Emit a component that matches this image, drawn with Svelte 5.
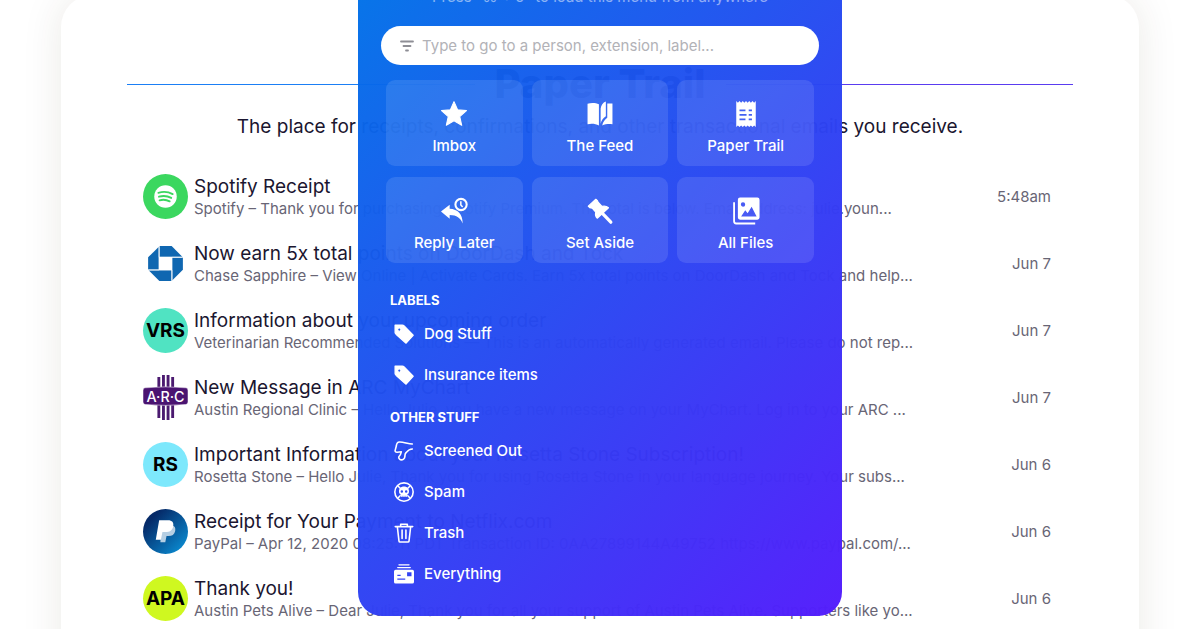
<script>
  const shortcuts = [
    { icon: 'star', label: 'Imbox' },
    { icon: 'feed', label: 'The Feed' },
    { icon: 'receipt', label: 'Paper Trail' },
    { icon: 'reply', label: 'Reply Later' },
    { icon: 'pin', label: 'Set Aside' },
    { icon: 'files', label: 'All Files' }
  ];

  const groups = [
    {
      title: 'Labels',
      items: [
        { icon: 'tag', label: 'Dog Stuff' },
        { icon: 'tag', label: 'Insurance items' }
      ]
    },
    {
      title: 'Other stuff',
      items: [
        { icon: 'thumb', label: 'Screened Out' },
        { icon: 'spam', label: 'Spam' },
        { icon: 'trash', label: 'Trash' },
        { icon: 'everything', label: 'Everything' }
      ]
    }
  ];

  const emails = [
    { logo: 'spotify', subject: 'Spotify Receipt', preview: 'Spotify – Thank you for purchasing Spotify Premium. The total is below. Email address: julie.youn...', date: '5:48am' },
    { logo: 'chase', subject: 'Now earn 5x total points on DoorDash and Tock', preview: 'Chase Sapphire – View Online | Activate Cards. Earn 5x total points on DoorDash and Tock and help...', date: 'Jun 7' },
    { initials: 'VRS', color: '#50e3c2', subject: 'Information about your upcoming order', preview: 'Veterinarian Recommended Solutions — This is an automatically generated email. Please do not rep...', date: 'Jun 7' },
    { logo: 'arc', subject: 'New Message in ARC MyChart', preview: 'Austin Regional Clinic – Hello Julie, you have a new message on your MyChart. Log in to your ARC ...', date: 'Jun 7' },
    { initials: 'RS', color: '#7de8fc', subject: 'Important Information about your Rosetta Stone Subscription!', preview: 'Rosetta Stone – Hello Julie, Thank you for using Rosetta Stone in your language journey. Your subs...', date: 'Jun 6' },
    { logo: 'paypal', subject: 'Receipt for Your Payment to Netflix.com', preview: 'PayPal – Apr 12, 2020 08:25:11 PDT Transaction ID: 0AA27899144A49752 https://www.paypal.com/...', date: 'Jun 6' },
    { initials: 'APA', color: '#cff820', subject: 'Thank you!', preview: 'Austin Pets Alive – Dear Julie, Thank you for all your support of Austin Pets Alive. Supporters like yo...', date: 'Jun 6' }
  ];
</script>

{#snippet glyph(name)}
  <svg class="glyph" viewBox="0 0 24 24" aria-hidden="true">
    {#if name === 'star'}
      <path d="M12 0.6l3.3 7.5 8.2.8-6.2 5.5 1.8 8-7.1-4.2-7.1 4.2 1.8-8L.5 8.9l8.2-.8z" fill="currentColor" stroke="currentColor" stroke-linejoin="round" />
    {:else if name === 'feed'}
      <path d="M.5 2.500C4 1.600 8 1.700 11 3v19.500C8 21 4 20.600.5 21.500z" fill="currentColor" />
      <path d="M12.600 7c.4-3 2-5.500 4.800-6.500v13.500c-2.600 1.500-4.200 4-4.800 7z" fill="currentColor" />
      <path d="M18.700 2.300h4.800v19.200c-3.500-.4-6.500-.2-9.500 1 .8-3 2.400-5.500 4.700-7z" fill="currentColor" />
    {:else if name === 'receipt'}
      <path fill-rule="evenodd" fill="currentColor" d="M3 0l1.500 1.500L6 0l1.500 1.500L9 0l1.500 1.500L12 0l1.500 1.500L15 0l1.500 1.500L18 0l1.500 1.500L21 0v24l-1.500-1.500L18 24l-1.500-1.500L15 24l-1.500-1.500L12 24l-1.500-1.500L9 24l-1.500-1.500L6 24l-1.500-1.500L3 24zM6 7.800v1.600h5.500V7.800zm8.500 0v1.600h3V7.800zM6 12v1.600h6.500V12zm8.500 0v1.600h3V12zM6 16.200v1.600h5.500v-1.600zm8.500 0v1.600h3v-1.600z" />
    {:else if name === 'reply'}
      <path fill="currentColor" d="M0 12.500L8 6.300v3.600c7.500.3 12 5 12 13.700-2-5-5.500-7.800-12-7.800v3.400z" />
      <circle cx="18.500" cy="6" r="5.200" fill="none" stroke="currentColor" stroke-width="1.900" />
      <path d="M18.300 3v3.400l1.700 1.900" fill="none" stroke="currentColor" stroke-width="1.400" />
    {:else if name === 'pin'}
      <path fill="currentColor" stroke="currentColor" stroke-width="1.200" stroke-linejoin="round" d="M1.200 7.500L8.200 1.200c1 .5 1.800 1.500 2.200 3l3.400 3.600c2.200-.5 4.600 0 6 1.200L9.400 18.600c-1.400-1.500-1.800-3.600-1.300-5.600L4.800 9.400C3 9.300 1.900 8.600 1.200 7.500z" />
      <path d="M14 14l8 8.300" stroke="currentColor" stroke-width="3" stroke-linecap="round" />
    {:else if name === 'files'}
      <path fill-rule="evenodd" fill="currentColor" d="M6.500-.5h16a2 2 0 0 1 2 2v16.500a2 2 0 0 1-2 2h-16a2 2 0 0 1-2-2V1.500a2 2 0 0 1 2-2zM9.200 4a2 2 0 1 0 .1 4 2 2 0 0 0-.1-4zM7.500 17h14.300l-4.600-9-3.700 6-2.200-2.600z" />
      <path d="M1 4v17.500a2 2 0 0 0 2 2h17.500" fill="none" stroke="currentColor" stroke-width="1.700" />
    {:else if name === 'tag'}
      <path fill-rule="evenodd" fill="currentColor" stroke="currentColor" stroke-linejoin="round" stroke-width="1.500" d="M1.300 1.300h8.700c1 0 1.500.3 2.200 1L23 13.500 14.500 23 2.700 12.500c-.8-.8-1.400-1.200-1.400-2.300zM6.300 4.700a2 2 0 1 0 .1 4 2 2 0 0 0-.1-4z" />
    {:else if name === 'thumb'}
      <path fill="none" stroke="currentColor" stroke-width="1.900" stroke-linejoin="round" stroke-linecap="round" d="M22 3.500C17 3.500 11 1 6.500 1.300 3.500 1.500 3 4 2.800 6L1.300 11.500c0 1.500 1 2 2.500 1.900l5-.4c-.6 1-.3 3.500-2.600 5.300-1.200 1.500-.2 3.200 1.500 4.200 3 .6 5.300-1.600 5.300-3.600.4-2-.4-3 1.500-4.900 2-2.500 3.500-4.500 7.500-4.500" />
    {:else if name === 'spam'}
      <circle cx="12" cy="12" r="11" fill="none" stroke="currentColor" stroke-width="1.900" />
      <path d="M4.500 4.500l3.500 3.500M19.500 4.500L16 8M4.500 19.500L8 16M19.500 19.500L16 16" stroke="currentColor" stroke-width="1.800" />
      <path fill-rule="evenodd" fill="currentColor" d="M12 5.500c-4 0-6 2.600-6 5.800 0 2 1 3.200 2.300 3.900l.5 2.800h1.500v-1.500h.9V18h1.600v-1.500h.9V18h1.500l.5-2.800c1.300-.7 2.300-1.900 2.300-3.900 0-3.200-2-5.800-6-5.800zM9.400 10a1.500 1.500 0 1 1 0 3 1.500 1.500 0 0 1 0-3zm5.200 0a1.500 1.500 0 1 1 0 3 1.500 1.500 0 0 1 0-3z" />
    {:else if name === 'trash'}
      <path fill="none" stroke="currentColor" stroke-width="1.900" stroke-linecap="round" stroke-linejoin="round" d="M1.500 4.300h21M8 4V1.500h8V4M4 4.500l2 17.200c.1.700.5 1 1.200 1h9.600c.7 0 1.100-.3 1.200-1L20 4.500M9.700 8.500v10M14.300 8.500v10" />
    {:else if name === 'everything'}
      <path d="M6 1h12M4.500 4.300h15" stroke="currentColor" stroke-width="1.700" stroke-linecap="round" />
      <path fill-rule="evenodd" fill="currentColor" d="M2 7h20a2 2 0 0 1 2 2v12.500a2 2 0 0 1-2 2H2a2 2 0 0 1-2-2V9a2 2 0 0 1 2-2zm13.700 3v4.800h5.300V10zM4 13v1.500h4V13zm0 4.500V19h9.500v-1.500z" />
    {/if}
  </svg>
{/snippet}

{#snippet logo(name)}
  <svg class="avatar" viewBox="0 0 44 44" aria-hidden="true">
    {#if name === 'spotify'}
      <circle cx="22" cy="22" r="22" fill="#3bd75f" />
      <circle cx="22" cy="22" r="11" fill="#fff" />
      <path d="M15 18.400c4.500-1.300 10-.9 14 1.300M15.600 22.200c4-1.100 8.500-.7 12 1.200M16.200 25.700c3.500-.9 7-.5 9.900 1.100" fill="none" stroke="#3bd75f" stroke-width="1.800" stroke-linecap="round" />
    {:else if name === 'chase'}
      <g fill="#0f67b1">
        <path d="M16 5h12l10.500 10.500H16z" />
        <path d="M39 16v12L28.500 38.500V16z" />
        <path d="M28 39H16L5.500 28.500H28z" />
        <path d="M5 28V16L15.500 5.500V28z" />
      </g>
      <path d="M15.700 5v11h23M39 16H28.300v23M28.300 39V28.300H5M5 28.300h10.700V5" fill="none" stroke="#fff" stroke-width=".6" />
      <path d="M16 16h12.300v12.300H16z" fill="#fff" />
    {:else if name === 'arc'}
      <path d="M15.500 2v40M20 0v44M24.500 0v44M29 2v40" stroke="#4b1a70" stroke-width="2.800" />
      <path d="M2 12.500q20-1.800 40 0 2 0 2 3v11q0 2-2 2.300-20 1.800-40 0-2-.3-2-2.300v-11q0-3 2-3z" fill="#4a1371" stroke="#fff" stroke-width=".5" />
      <text x="22" y="26" text-anchor="middle" font-size="14" font-weight="500" fill="#fff">A·R·C</text>
    {:else if name === 'paypal'}
      <defs>
        <linearGradient id="paypal-blue" x1="0" y1="0" x2="1" y2="1">
          <stop offset=".2" stop-color="#052a68" />
          <stop offset=".9" stop-color="#0a8ad0" />
        </linearGradient>
      </defs>
      <circle cx="22" cy="22" r="22" fill="url(#paypal-blue)" />
      <path d="M18 16h10c3 .500 4 2.500 3.500 5.500-.8 3.500-3 5-6.500 5h-2l-1.200 6H17z" fill="#b6cfe3" />
      <path d="M15.800 11h8.700c4 0 5.800 2.200 5 6-.8 4-3.500 5.500-7.500 5.500h-3L17.500 30h-5z" fill="#fff" />
    {/if}
  </svg>
{/snippet}

<main class="page">
  <section class="card">
    <header class="heading"><h1>Paper Trail</h1></header>
    <p class="intro">The place for receipts, confirmations, and other transactional emails you receive.</p>
    <ul class="emails">
      {#each emails as mail}
        <li class="email">
          {#if mail.logo}
            {@render logo(mail.logo)}
          {:else}
            <span class="avatar initials" style:background={mail.color}>{mail.initials}</span>
          {/if}
          <div class="summary">
            <h2>{mail.subject}</h2>
            <p>{mail.preview}</p>
          </div>
          <time>{mail.date}</time>
        </li>
      {/each}
    </ul>
  </section>
</main>

<nav class="menu" aria-label="Menu">
  <p class="hint">Press “⌘ + J” to load this menu from anywhere</p>
  <div class="search">
    <svg viewBox="0 0 14 12" aria-hidden="true">
      <path d="M1 1.500h12M3.500 6h7M6 10.500h2" stroke="#8e8e95" stroke-width="1.800" stroke-linecap="round" />
    </svg>
    <input type="text" aria-label="Go to" placeholder="Type to go to a person, extension, label..." />
  </div>
  <div class="tiles">
    {#each shortcuts as item}
      <a class="tile" href="#{item.icon}">{@render glyph(item.icon)}<span>{item.label}</span></a>
    {/each}
  </div>
  {#each groups as group}
    <h3>{group.title}</h3>
    <ul class="links">
      {#each group.items as item}
        <li><a href="#{item.icon}">{@render glyph(item.icon)}<span>{item.label}</span></a></li>
      {/each}
    </ul>
  {/each}
</nav>

<style>
  :global(body) {
    margin: 0;
    background: #fff;
    color: #1b1630;
    font-family: Inter, 'Liberation Sans', sans-serif;
    overflow: hidden;
  }
  :global(#app) {
    position: relative;
  }
  h1, h2, h3, p, ul {
    margin: 0;
    padding: 0;
  }
  ul {
    list-style: none;
  }
  a {
    color: inherit;
    text-decoration: none;
  }
  .page {
    display: flow-root;
    padding: 0 61px;
  }
  .card {
    margin-top: -5px;
    padding: 59px 66px 60px;
    border-radius: 32px;
    box-shadow: 0 0 40px rgba(60, 50, 20, 0.1);
  }
  .heading {
    display: flex;
    align-items: center;
    gap: 20px;
    height: 60px;
  }
  .heading::before,
  .heading::after {
    content: '';
    flex: 1;
    height: 1px;
    background: #1b7ff5;
  }
  .heading::after {
    background: #5a3cf0;
  }
  h1 {
    font-size: 40px;
    font-weight: 800;
    line-height: 44px;
  }
  .intro {
    font-size: 19px;
    line-height: 26px;
    text-align: center;
    white-space: nowrap;
  }
  .emails {
    padding: 23px 22px 0 16px;
  }
  .email {
    display: flex;
    align-items: center;
    gap: 6px;
    height: 67px;
  }
  .avatar {
    flex: none;
    width: 45px;
    height: 45px;
  }
  .initials {
    display: flex;
    align-items: center;
    justify-content: center;
    border-radius: 50%;
    color: #000;
    font-size: 19px;
    font-weight: 700;
  }
  .summary {
    flex: 1;
    min-width: 0;
    white-space: nowrap;
  }
  h2 {
    font-size: 19px;
    font-weight: 400;
    line-height: 24px;
  }
  .summary p {
    color: #686575;
    font-size: 15px;
    line-height: 20px;
  }
  time {
    color: #686575;
    font-size: 15px;
  }
  .menu {
    position: absolute;
    top: 0;
    left: 50%;
    transform: translateX(-50%);
    box-sizing: border-box;
    width: 484px;
    max-width: 100%;
    padding: 0 28px 11px;
    border-radius: 0 0 24px 24px;
    background: linear-gradient(135deg, rgba(0, 112, 232, 0.97), rgba(84, 28, 252, 0.98));
    color: #fff;
    font-size: 15px;
    font-weight: 500;
  }
  .hint {
    margin-top: -13px;
    line-height: 20px;
    font-weight: 400;
    text-align: center;
    opacity: 0.5;
  }
  .search {
    display: flex;
    align-items: center;
    gap: 8px;
    margin: 19px -5px 15px;
    padding: 0 19px;
    border-radius: 20px;
    background: #fff;
  }
  .search svg {
    width: 14px;
    height: 12px;
  }
  .search input {
    flex: 1;
    min-width: 0;
    height: 39px;
    padding: 0;
    border: 0;
    outline: 0;
    background: none;
    font: inherit;
    font-weight: 400;
  }
  .search input::placeholder {
    color: #b2b2b7;
  }
  .tiles {
    display: grid;
    grid-template-columns: repeat(3, 1fr);
    gap: 11px 9px;
    margin-bottom: 26px;
  }
  .tile {
    display: flex;
    flex-direction: column;
    align-items: center;
    gap: 8px;
    padding: 21px 0 10px;
    border-radius: 9px;
    background: rgba(255, 255, 255, 0.11);
    line-height: 21px;
  }
  .tile .glyph {
    width: 26px;
    height: 26px;
  }
  .glyph {
    overflow: visible;
  }
  h3 {
    padding: 0 4px;
    font-size: 13px;
    font-weight: 700;
    line-height: 22px;
    text-transform: uppercase;
  }
  .links {
    margin: 2px 0 11px;
  }
  .links a {
    display: flex;
    align-items: center;
    gap: 10px;
    padding: 0 8px;
    line-height: 41px;
  }
  .links .glyph {
    width: 20px;
    height: 20px;
  }
</style>
